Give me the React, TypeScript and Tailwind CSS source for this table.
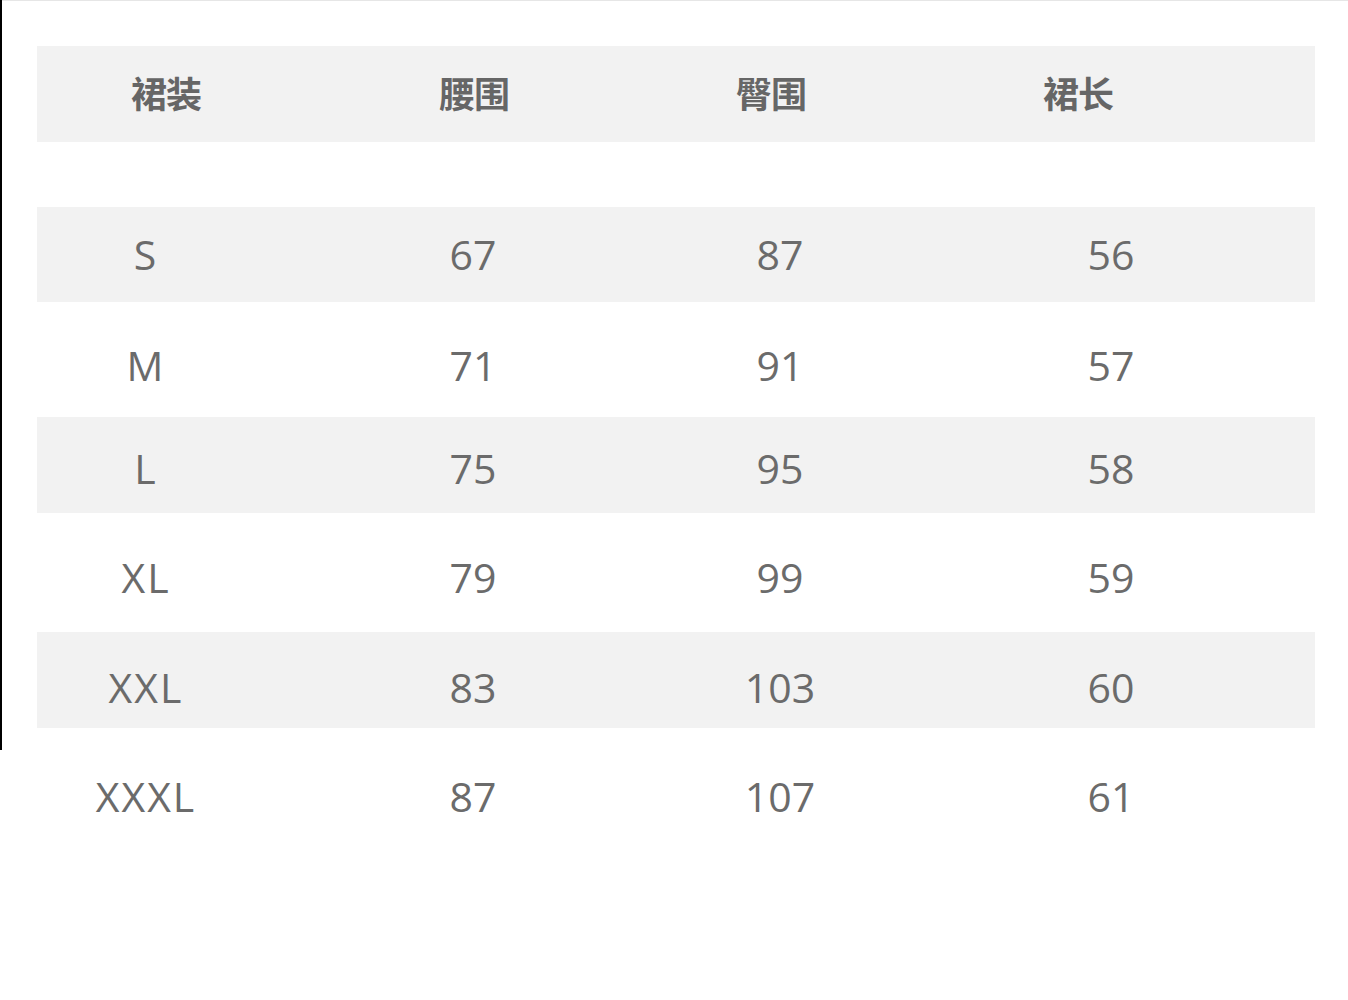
const headers = [
    { label: "裙装", cls: "pl-[36px]" },
    { label: "腰围", cls: "pl-[2px]" },
    { label: "臀围", cls: "pr-[18px]" },
    { label: "裙长", cls: "pr-[32px]" },
];

const rows = [
    { size: "S", waist: "67", hip: "87", len: "56", band: true, h: "h-[95px]", pt: "pt-[0px]" },
    { size: "M", waist: "71", hip: "91", len: "57", band: false, h: "h-[115px]", pt: "pt-[12px]" },
    { size: "L", waist: "75", hip: "95", len: "58", band: true, h: "h-[96px]", pt: "pt-[8px]" },
    { size: "XL", waist: "79", hip: "99", len: "59", band: false, h: "h-[119px]", pt: "pt-[11px]" },
    { size: "XXL", waist: "83", hip: "103", len: "60", band: true, h: "h-[96px]", pt: "pt-[15px]" },
    { size: "XXXL", waist: "87", hip: "107", len: "61", band: false, h: "h-[138px]", pt: "pt-[0px]" },
];

export default function App() {
    return (
        <div className="flex w-[1348px] h-[1000px] bg-white" style={{ fontFamily: '"Open Sans", "Noto Sans CJK SC", sans-serif' }}>
            <div className="w-[2px] h-[750px] bg-black shrink-0" />
            <div className="flex-1 border-t border-[#e6e6e6] pl-[35px] pr-[33px] pt-[45px]">
                {/* header */}
                <div className="grid grid-cols-[222px_428px_186px_1fr] h-[96px] pb-[5px] bg-[#f2f2f2] items-center">
                    {headers.map(h => (
                        <div key={h.label} className={`flex justify-center ${h.cls}`}>
                            <span className="text-[36px] font-bold text-[#666666] tracking-[-1px]" style={{ fontFamily: '"Noto Sans CJK SC", sans-serif' }}>{h.label}</span>
                        </div>
                    ))}
                </div>

                <div className="h-[65px]" />

                {rows.map(r => (
                    <div key={r.size} className={`grid grid-cols-[222px_428px_186px_1fr] items-center ${r.h} ${r.pt} ${r.band ? "bg-[#f2f2f2]" : "bg-white"}`}>
                        <div className="flex justify-center pr-[4px]">
                            <span className="text-[41px] text-[#6b6b6b] tracking-[2px]">{r.size}</span>
                        </div>
                        <div className="flex justify-center">
                            <span className="text-[41px] text-[#6b6b6b]">{r.waist}</span>
                        </div>
                        <div className="flex justify-center pl-[0px]">
                            <span className="text-[41px] text-[#6b6b6b]">{r.hip}</span>
                        </div>
                        <div className="flex justify-center pl-[34px]">
                            <span className="text-[41px] text-[#6b6b6b]">{r.len}</span>
                        </div>
                    </div>
                ))}
            </div>
        </div>
    );
}
